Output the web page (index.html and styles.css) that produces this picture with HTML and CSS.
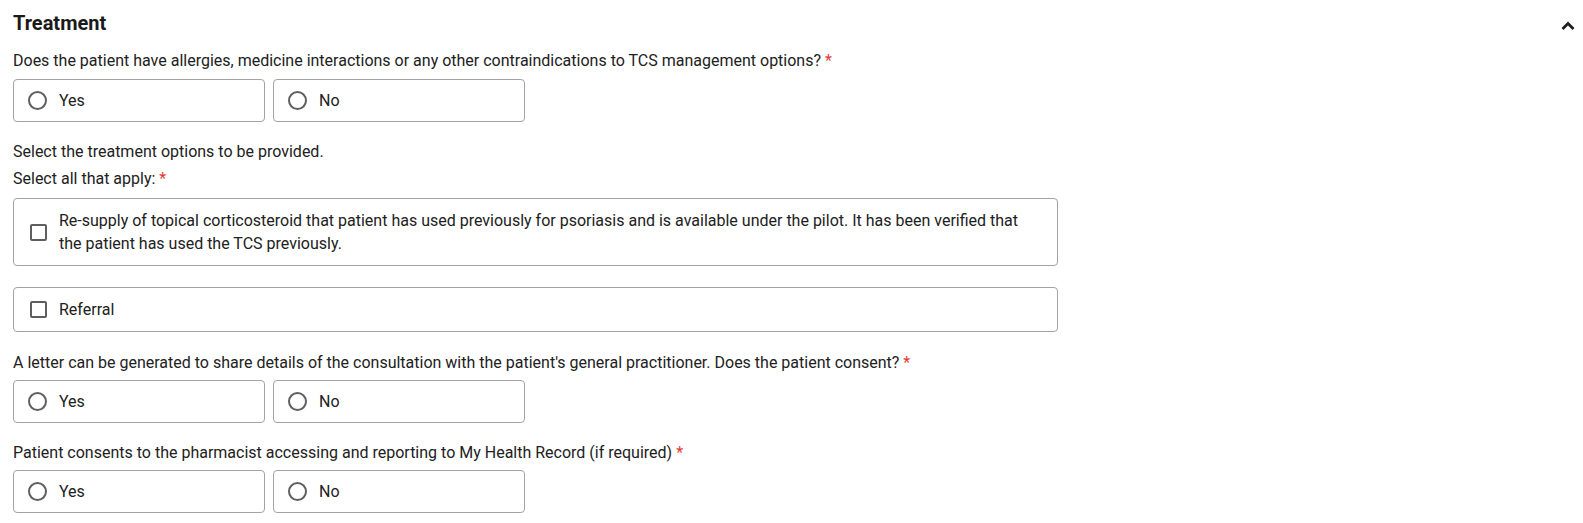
FILE: index.html
```html
<!DOCTYPE html>
<html lang="en">
<head>
<meta charset="utf-8">
<title>Treatment</title>
<link rel="stylesheet" href="styles.css">
</head>
<body>
<section class="panel">
  <header class="panel-head">
    <h2 class="panel-title">Treatment</h2>
    <svg class="chevron" width="14" height="10" viewBox="0 0 14 10" aria-hidden="true"><path d="M2.5 8 L7 3.5 L11.5 8" fill="none" stroke="#1f1f1f" stroke-width="2.8" stroke-linecap="square"/></svg>
  </header>

  <div class="field field-q1">
    <div class="label label-radio">Does the patient have allergies, medicine interactions or any other contraindications to TCS management options? <span class="req">*</span></div>
    <div class="radio-row">
      <label class="radio-box"><span class="radio"></span><span>Yes</span></label>
      <label class="radio-box"><span class="radio"></span><span>No</span></label>
    </div>
  </div>

  <div class="field field-q2">
    <div class="label label-first">Select the treatment options to be provided.</div>
    <div class="label">Select all that apply: <span class="req">*</span></div>
    <div class="check-list">
      <label class="check-box"><span class="check"></span><span class="check-text">Re-supply of topical corticosteroid that patient has used previously for psoriasis and is available under the pilot. It has been verified that the patient has used the TCS previously.</span></label>
      <label class="check-box"><span class="check"></span><span class="check-text">Referral</span></label>
    </div>
  </div>

  <div class="field field-q3">
    <div class="label label-radio2">A letter can be generated to share details of the consultation with the patient's general practitioner. Does the patient consent? <span class="req">*</span></div>
    <div class="radio-row">
      <label class="radio-box"><span class="radio"></span><span>Yes</span></label>
      <label class="radio-box"><span class="radio"></span><span>No</span></label>
    </div>
  </div>

  <div class="field field-q4">
    <div class="label label-radio2">Patient consents to the pharmacist accessing and reporting to My Health Record (if required) <span class="req">*</span></div>
    <div class="radio-row">
      <label class="radio-box"><span class="radio"></span><span>Yes</span></label>
      <label class="radio-box"><span class="radio"></span><span>No</span></label>
    </div>
  </div>
</section>
</body>
</html>
```

FILE: styles.css
```css
* { box-sizing: border-box; }
html, body { margin: 0; padding: 0; background: #fff; }
body {
  font-family: Roboto, "Liberation Sans", Arial, sans-serif;
  font-size: 16px;
  color: #212121;
}
.panel {
  padding: 11px 8px 0 13px;
}
.panel-head {
  display: flex;
  align-items: center;
  justify-content: space-between;
  height: 24px;
}
.panel-title {
  margin: 0;
  font-size: 20px;
  font-weight: 700;
  line-height: 24px;
  color: #1a1a1a;
}
.chevron { display: block; margin-top: 3px; }

.field-q1 { margin-top: 16px; }
.field-q2 { margin-top: 20px; }
.field-q3 { margin-top: 21px; }
.field-q4 { margin-top: 20px; }

.label {
  line-height: 20px;
  margin-bottom: 9px;
}
.label-radio { margin-bottom: 8px; }
.label-radio2 { margin-bottom: 7px; }
.label-first { margin-bottom: 7px; }
.req { color: #e53935; }

.radio-row {
  display: flex;
  gap: 8px;
}
.radio-box {
  width: 252px;
  height: 43px;
  border: 1px solid #a3a3a3;
  border-radius: 4px;
  display: flex;
  align-items: center;
  padding-left: 14px;
  gap: 12px;
}
.radio {
  width: 19px;
  height: 19px;
  border: 2px solid #5f5f5f;
  border-radius: 50%;
  flex: none;
}

.check-list {
  display: flex;
  flex-direction: column;
  gap: 21px;
  width: 1045px;
}
.check-box {
  border: 1px solid #a3a3a3;
  border-radius: 4px;
  display: flex;
  align-items: center;
  padding: 10px 24px 10px 16px;
  gap: 12px;
}
.check {
  width: 17px;
  height: 17px;
  border: 2px solid #5f5f5f;
  border-radius: 2px;
  flex: none;
}
.check-text { line-height: 23px; }
```
